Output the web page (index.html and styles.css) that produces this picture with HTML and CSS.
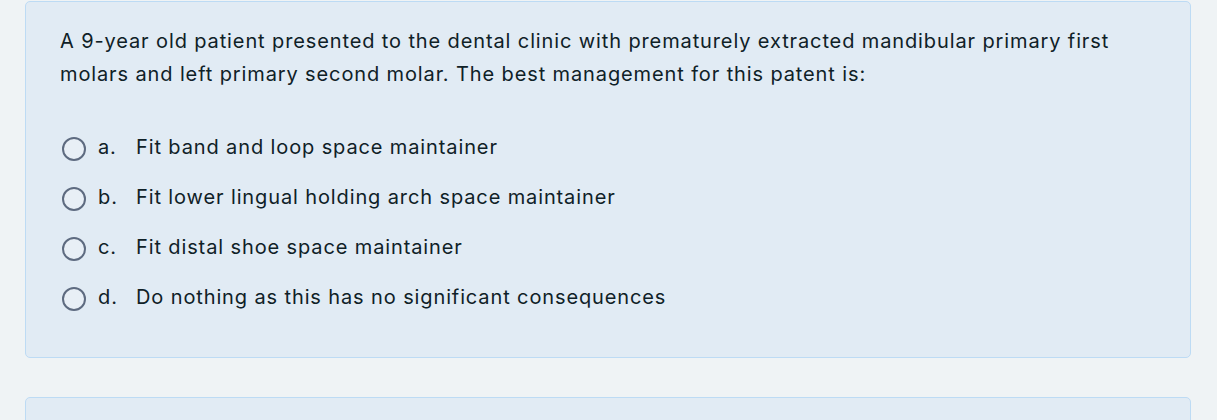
FILE: index.html
```html
<!DOCTYPE html>
<html>
<head>
<meta charset="utf-8">
<link rel="stylesheet" href="styles.css">
</head>
<body>
<div class="page">
  <div class="card">
    <p class="qtext">A 9-year old patient presented to the dental clinic with prematurely extracted mandibular primary first molars and left primary second molar. The best management for this patent is:</p>
    <div class="answers">
      <label class="opt"><span class="radio"></span><span class="letter">a.</span><span class="text">Fit band and loop space maintainer</span></label>
      <label class="opt"><span class="radio"></span><span class="letter">b.</span><span class="text">Fit lower lingual holding arch space maintainer</span></label>
      <label class="opt"><span class="radio"></span><span class="letter">c.</span><span class="text">Fit distal shoe space maintainer</span></label>
      <label class="opt"><span class="radio"></span><span class="letter">d.</span><span class="text">Do nothing as this has no significant consequences</span></label>
    </div>
  </div>
  <div class="card card-next"></div>
</div>
</body>
</html>
```
FILE: styles.css
```css
html, body {
  margin: 0;
  padding: 0;
  background: #eff3f5;
}
body {
  font-family: Inter, "Noto Sans", sans-serif;
  color: #0f2127;
}
.page {
  padding: 1px 26px 0 25px;
  display: flex;
  flex-direction: column;
  gap: 39px;
}
.card {
  background: #e1ebf4;
  border: 1px solid #bddbf4;
  border-radius: 5px;
  padding: 23px 34px 26px;
  height: 357px;
  box-sizing: border-box;
}
.card-next {
  height: 60px;
}
.qtext {
  margin: 0;
  font-size: 20px;
  letter-spacing: 0.88px;
  line-height: 33px;
}
.answers {
  margin-top: 39px;
  display: flex;
  flex-direction: column;
  gap: 17px;
}
.opt {
  display: flex;
  align-items: center;
  height: 33px;
  font-size: 20px;
  letter-spacing: 0.88px;
}
.radio {
  width: 24px;
  height: 24px;
  box-sizing: border-box;
  border: 2px solid #5e6b80;
  border-radius: 50%;
  background: #e8eff6;
  margin-left: 2px;
  margin-top: 4px;
  flex: none;
}
.letter {
  margin-left: 12px;
  width: 38px;
}
```
